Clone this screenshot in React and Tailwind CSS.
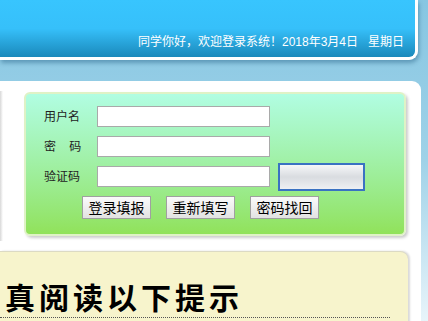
import React from 'react';

const font = { fontFamily: '"Liberation Sans", "Noto Sans CJK SC", sans-serif' };

const Field = ({ label, children }) => (
  <div className="flex items-center h-[21px] mb-[9px]">
    <div className="w-[53px] text-[12px] text-[#222] whitespace-pre">{label}</div>
    <input
      type="text"
      className="w-[173px] h-[21px] bg-white border border-[#a9a9a9] outline-none"
    />
    {children}
  </div>
);

const Btn = ({ children }) => (
  <button
    type="button"
    className="w-[69px] h-[23px] border border-[#a0a0a0] bg-gradient-to-b from-[#fbfbfb] to-[#e2e2e2] text-[14px] text-black leading-none"
  >
    {children}
  </button>
);

const LoginForm = () => (
  <div className="ml-[24px] w-[382px] h-[144px] rounded-[6px] border-2 border-[#dff2c6] bg-gradient-to-b from-[#b1fde2] to-[#91e25a] shadow-[2px_2px_3px_rgba(0,0,0,0.2)] pl-[18px] pt-[12px]">
    <Field label="用户名" />
    <Field label={'密    码'} />
    <Field label="验证码">
      <div className="ml-[8px] w-[87px] h-[28px] shrink-0 border-2 border-[#3a72c2] bg-gradient-to-b from-[#f6f7f9] via-[#d9dce0] to-[#eef0f3]" />
    </Field>
    <div className="flex gap-[15px] ml-[38px] mt-[4px]">
      <Btn>登录填报</Btn>
      <Btn>重新填写</Btn>
      <Btn>密码找回</Btn>
    </div>
  </div>
);

export default function App() {
  return (
    <div
      className="w-[428px] h-[321px] overflow-hidden bg-gradient-to-b from-[#86c6e2] via-[#9fd2e8] to-[#e8f4fa]"
      style={font}
    >
      {/* header */}
      <div className="w-[418px] h-[60px] rounded-br-[9px] border-b-[3px] border-r-[3px] border-white bg-gradient-to-b from-[#38c5fe] via-[#36c0fa] to-[#1a89bb] shadow-[1px_3px_4px_rgba(0,60,100,0.35)] flex items-end justify-end pr-[11px] pb-[6px]">
        <span className="text-white text-[12px] whitespace-pre">同学你好，欢迎登录系统！2018年3月4日   星期日</span>
      </div>

      {/* main panel */}
      <div className="mt-[21px] pt-[11px] w-[421px] h-[240px] bg-white rounded-tr-[9px] relative">
        <div className="absolute left-0 top-[10px] w-[3px] h-[150px] bg-gradient-to-r from-[#d8d8d8] to-white" />
        <LoginForm />

        <div className="mt-[15px] w-[408px] h-[80px] bg-[#f7f4cc] border-t border-[#dcdac4] rounded-tr-[8px] shadow-[2px_0_2px_rgba(0,0,0,0.15)]">
          <div className="pl-[5px] pt-[32px] text-[30px] font-bold text-black leading-none tracking-[4px]">
            真阅读以下提示
          </div>
          <div className="mt-[3px] w-[390px] border-b border-dotted border-[#555]" />
        </div>
      </div>
    </div>
  );
}
